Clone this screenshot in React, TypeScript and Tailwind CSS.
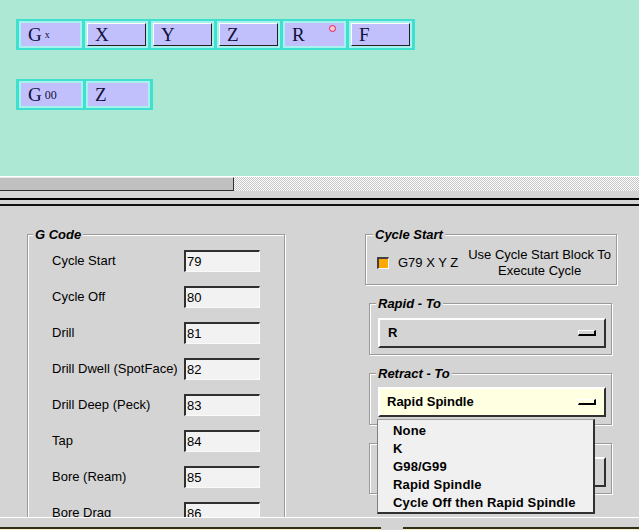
import React from "react";

const font = "font-['Liberation_Sans',Arial,sans-serif]";

function Tile({
  children,
  raised,
  wide,
}: {
  children: React.ReactNode;
  raised?: boolean;
  wide?: boolean;
}) {
  return (
    <div
      className={`${wide ? "w-[64px]" : "w-[63px]"} h-[27px] border-2 border-[#a8f2ee] bg-[#c2c0fc]`}
    >
      <div
        className={`h-full flex items-center pl-[7px] font-['Liberation_Serif','Times_New_Roman',serif] text-[#10103a] relative ${
          raised
            ? "border-t border-l border-t-white border-l-white border-b border-r border-b-[#202020] border-r-[#202020]"
            : ""
        }`}
      >
        {children}
      </div>
    </div>
  );
}

function Letter({ c }: { c: string }) {
  return <span className="text-[19px] leading-none">{c}</span>;
}

const codes = [
  ["Cycle Start", "79"],
  ["Cycle Off", "80"],
  ["Drill", "81"],
  ["Drill Dwell (SpotFace)", "82"],
  ["Drill Deep (Peck)", "83"],
  ["Tap", "84"],
  ["Bore (Ream)", "85"],
  ["Bore Drag", "86"],
];

const retractOptions = [
  "None",
  "K",
  "G98/G99",
  "Rapid Spindle",
  "Cycle Off then Rapid Spindle",
];

function GroupBox({
  title,
  className,
  legendClass,
  children,
}: {
  title?: string;
  className?: string;
  legendClass?: string;
  children: React.ReactNode;
}) {
  return (
    <fieldset
      className={`border border-[#9a9a9a] shadow-[inset_1px_1px_0_#fff,1px_1px_0_#fff] ${className ?? ""}`}
    >
      {title ? (
        <legend
          className={`px-[2px] bg-[#d4d4d4] text-[13px] leading-[13px] font-bold italic ${legendClass ?? ""}`}
        >
          {title}
        </legend>
      ) : null}
      {children}
    </fieldset>
  );
}

function SelectArrow() {
  return (
    <div className="w-[18px] h-[6px] border-t border-l border-t-white border-l-white border-b-2 border-r-2 border-b-black border-r-black" />
  );
}

export default function App() {
  return (
    <div className={`w-[639px] h-[530px] overflow-hidden bg-[#d4d4d4] ${font}`}>
      {/* top canvas */}
      <div className="h-[176px] bg-[#ace8d4] pt-[19px] pl-[16px]">
        <div className="flex gap-[3px] bg-[#40e0d0] px-[3px] py-[2px] w-fit">
          <Tile>
            <Letter c="G" />
            <span className="text-[10px] ml-[3px]">x</span>
          </Tile>
          <Tile raised>
            <Letter c="X" />
          </Tile>
          <Tile raised>
            <Letter c="Y" />
          </Tile>
          <Tile raised>
            <Letter c="Z" />
          </Tile>
          <Tile>
            <Letter c="R" />
            <div className="absolute left-[44px] top-[2px] w-[7px] h-[7px] rounded-full border-[1.5px] border-[#e0204a] bg-[#ffc8d8]" />
          </Tile>
          <Tile raised>
            <Letter c="F" />
          </Tile>
        </div>
        <div className="flex gap-[3px] bg-[#40e0d0] px-[3px] py-[2px] w-fit mt-[29px]">
          <Tile wide>
            <Letter c="G" />
            <span className="text-[12px] ml-[3px]">00</span>
          </Tile>
          <Tile wide>
            <Letter c="Z" />
          </Tile>
        </div>
      </div>

      {/* horizontal scrollbar */}
      <div className="h-px bg-white" />
      <div className="h-[14px] flex">
        <div className="w-[234px] bg-[#c0c0c0] border-t border-t-[#e8e8e8] border-r border-b border-r-[#303030] border-b-[#303030]" />
        <div className="flex-1 bg-[repeating-conic-gradient(#c4c4c4_0%_25%,#ffffff_0%_50%)] bg-[length:2px_2px]" />
      </div>
      <div className="h-[7px]" />
      <div className="h-[2px] bg-black" />
      <div className="h-[4px]" />
      <div className="h-[2px] bg-[#101010]" />

      {/* property panel */}
      <div className="h-[311px] overflow-hidden flex text-[13px] text-black">
        <GroupBox
          title="G Code"
          className="ml-[27px] mt-[22px] w-[258px] h-[320px]"
          legendClass="ml-[5px]"
        >
          <div className="flex flex-col gap-[14px] pt-[9px]">
            {codes.map(([label, value]) => (
              <div key={label} className="flex items-center h-[22px]">
                <span className="w-[156px] pl-[24px] whitespace-nowrap">
                  {label}
                </span>
                <div className="w-[76px] h-[22px] bg-[#f2f2f2] border-t-2 border-l-2 border-t-[#303030] border-l-[#303030] border-b border-r border-b-[#fafafa] border-r-[#fafafa] flex items-center pl-[1px]">
                  {value}
                </div>
              </div>
            ))}
          </div>
        </GroupBox>

        <div className="ml-[80px] mt-[22px] w-[253px] flex flex-col">
          <GroupBox
            title="Cycle Start"
            className="w-[252px] h-[57px]"
            legendClass="ml-[7px]"
          >
            <div className="flex items-center h-[43px] pl-[11px]">
              <div className="w-[12px] h-[12px] bg-[#ffa800] border-t-2 border-l-2 border-t-[#404040] border-l-[#404040] border-b border-r border-b-white border-r-white" />
              <span className="ml-[9px]">G79 X Y Z</span>
              <div className="ml-[10px] text-center leading-[16px]">
                Use Cycle Start Block To
                <br />
                Execute Cycle
              </div>
            </div>
          </GroupBox>

          <GroupBox
            title="Rapid - To"
            className="ml-[4px] mt-[12px] w-[243px] h-[58px]"
            legendClass="ml-[6px]"
          >
            <div className="pt-[8px] pl-[8px]">
              <div className="w-[228px] h-[30px] bg-[#d4d4d4] border-t-2 border-l-2 border-t-white border-l-white border-b-2 border-r-2 border-b-[#303030] border-r-[#303030] flex items-center justify-between pl-[8px] pr-[8px] font-bold">
                R
                <SelectArrow />
              </div>
            </div>
          </GroupBox>

          <GroupBox
            title="Retract - To"
            className="ml-[4px] mt-[12px] w-[243px] h-[58px]"
            legendClass="ml-[6px]"
          >
            <div className="pt-[7px] pl-[8px]">
              <div className="relative w-[228px] h-[30px] bg-[#ffffe2] border-t-2 border-l-2 border-t-white border-l-white border-b-2 border-r-2 border-b-[#303030] border-r-[#303030] flex items-center justify-between pl-[7px] pr-[8px] font-bold">
                Rapid Spindle
                <SelectArrow />
                <div className="absolute z-10 top-[30px] left-[-3px] w-[218px] h-[95px] bg-[#f0f0f0] border border-t-[#a0a0a0] border-l-[#808080] border-r-2 border-b-2 border-r-[#303030] border-b-[#303030] pt-[2px] pl-[15px] tracking-[0.15px]">
                  {retractOptions.map((o) => (
                    <div key={o} className="leading-[18px] whitespace-nowrap">
                      {o}
                    </div>
                  ))}
                </div>
              </div>
            </div>
          </GroupBox>

          <GroupBox className="ml-[4px] mt-[18px] w-[243px] h-[51px]">
            <div className="pt-[13px] pl-[8px]">
              <div className="w-[228px] h-[30px] bg-[#d4d4d4] border-t-2 border-l-2 border-t-white border-l-white border-b-2 border-r-2 border-b-[#303030] border-r-[#303030]" />
            </div>
          </GroupBox>
        </div>
      </div>

      {/* bottom strip */}
      <div className="h-px bg-white" />
      <div className="h-[9px]" />
      <div className="flex h-[4px]">
        <div className="w-[381px] bg-[#f8f0c4] border-t-2 border-t-[#303018]" />
        <div className="w-[22px]" />
        <div className="flex-1 bg-[#f8f0c4] border-t-2 border-t-[#303018]" />
      </div>
    </div>
  );
}
